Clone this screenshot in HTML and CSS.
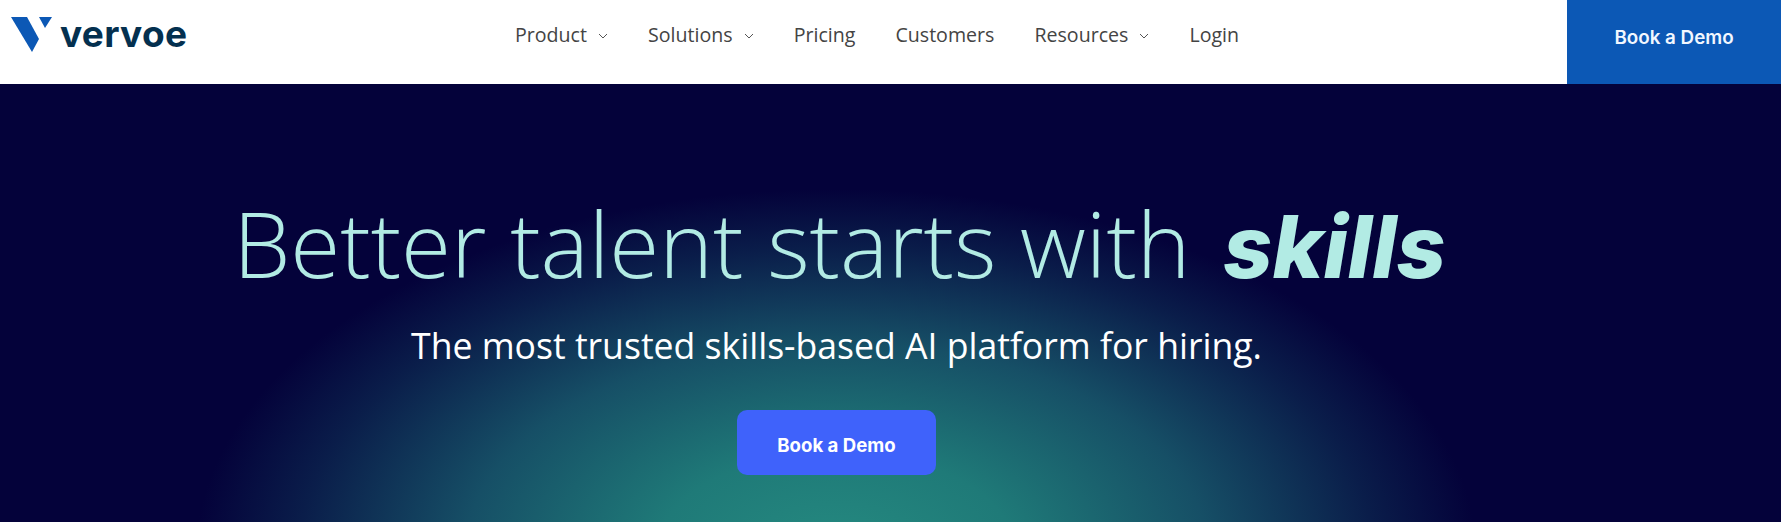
FILE: index.html
```html
<!doctype html>
<html lang="en">
<head>
	<meta charset="UTF-8">
	<title>Vervoe</title>
	<link rel="stylesheet" href="styles.css">
</head>
<body>
<header class="topbar">
	<a class="logo" href="#">
		<svg class="logo-mark" width="42" height="36" viewBox="0 0 42 36">
			<polygon points="0,0 16,0 28,22 21,35" fill="#0c58b5"/>
			<polygon points="28,0 41,0 34,11" fill="#0c58b5"/>
		</svg>
		<span class="logo-text">vervoe</span>
	</a>
	<nav class="menu">
		<a class="menu-item" href="#">Product <svg class="caret" width="10" height="6" viewBox="0 0 10 6"><path d="M1 1l4 4 4-4" fill="none" stroke="#555" stroke-width="1"/></svg></a>
		<a class="menu-item" href="#">Solutions <svg class="caret" width="10" height="6" viewBox="0 0 10 6"><path d="M1 1l4 4 4-4" fill="none" stroke="#555" stroke-width="1"/></svg></a>
		<a class="menu-item" href="#">Pricing</a>
		<a class="menu-item" href="#">Customers</a>
		<a class="menu-item" href="#">Resources <svg class="caret" width="10" height="6" viewBox="0 0 10 6"><path d="M1 1l4 4 4-4" fill="none" stroke="#555" stroke-width="1"/></svg></a>
		<a class="menu-item" href="#">Login</a>
	</nav>
	<a class="top-cta" href="#">Book a Demo</a>
</header>
<section class="hero">
	<h1 class="headline">Better talent starts with <em class="accent">skills</em></h1>
	<p class="subhead">The most trusted skills-based AI platform for hiring.</p>
	<a class="hero-cta" href="#">Book a Demo</a>
</section>
</body>
</html>
```
FILE: styles.css
```css
*{
	box-sizing: border-box;
}
html,body{
	margin: 0;
	height: 100%;
	overflow: hidden;
}
body{
	font-family: "Open Sans", "Noto Sans", sans-serif;
	background-color: #04023a;
}
a{
	text-decoration: none;
}
.topbar{
	display: flex;
	align-items: stretch;
	height: 84px;
	background-color: #fff;
}
.logo{
	display: flex;
	align-items: flex-start;
	gap: 7px;
	width: 515px;
	padding: 17px 0 0 11px;
}
.logo-mark{
	flex: none;
}
.logo-text{
	font-family: Inter, sans-serif;
	font-weight: 700;
	font-size: 37px;
	line-height: 33px;
	letter-spacing: 0.3px;
	color: #04304f;
}
.menu{
	display: flex;
	align-items: center;
	gap: 40px;
	flex: 1;
	padding-bottom: 16px;
}
.menu-item{
	font-size: 19.6px;
	color: #444;
}
.caret{
	margin-left: 6px;
	vertical-align: 3px;
}
.top-cta{
	display: flex;
	align-items: center;
	justify-content: center;
	width: 214px;
	padding-bottom: 10px;
	background-color: #0c58b5;
	color: #f2f7ff;
	font-family: Inter, sans-serif;
	font-size: 18.8px;
	font-weight: 600;
}
.hero{
	display: flex;
	flex-direction: column;
	align-items: center;
	height: 438px;
	padding: 104px 108px 0 0;
	background: radial-gradient(ellipse 640px 365px at 836px 470px, #258a80 0%, #1f7a78 28%, #164f66 58%, #0a1d4a 84%, #04023a 100%);
}
.headline{
	margin: 0;
	padding-left: 6px;
	font-size: 91px;
	font-weight: 300;
	line-height: 110px;
	color: #b2ebe4;
	white-space: nowrap;
}
.accent{
	margin-left: 9px;
	font-family: Inter, sans-serif;
	font-weight: 800;
	font-style: italic;
	font-size: 86px;
}
.subhead{
	margin: 18px 0 0;
	font-size: 35.6px;
	line-height: 50px;
	color: #fff;
}
.hero-cta{
	display: flex;
	align-items: center;
	justify-content: center;
	width: 199px;
	height: 65px;
	margin-top: 40px;
	padding-top: 5px;
	border-radius: 10px;
	background-color: #3f62fb;
	color: #fff;
	font-family: Inter, sans-serif;
	font-size: 18.6px;
	font-weight: 700;
}
```
